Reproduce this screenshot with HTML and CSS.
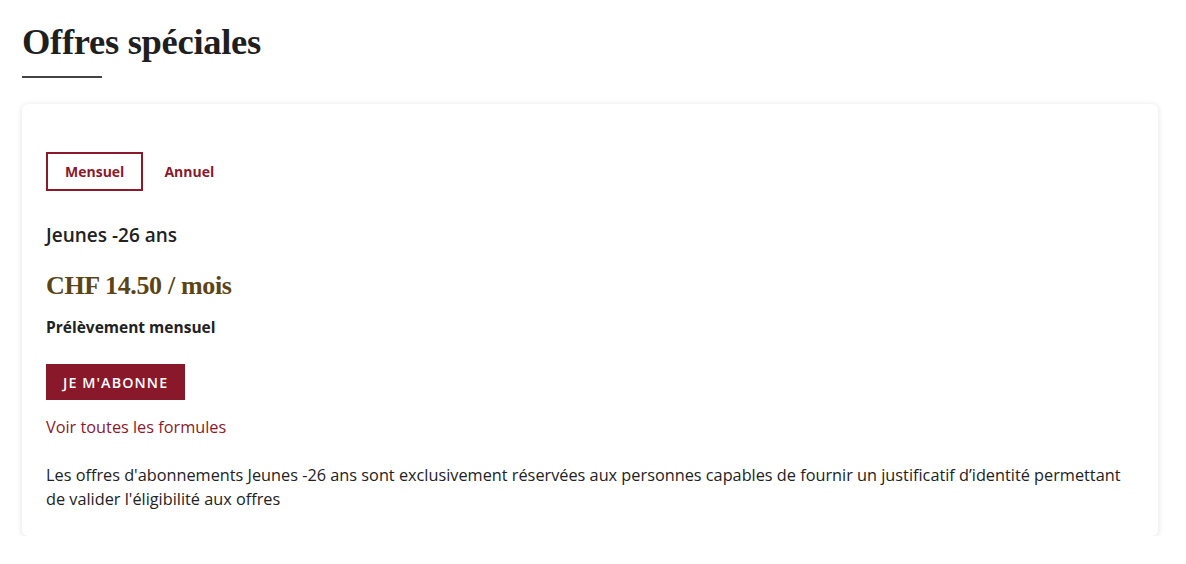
FILE: index.html
```html
<!DOCTYPE html>
<html lang="fr">
<head>
<meta charset="utf-8">
<title>Offres spéciales</title>
<link rel="stylesheet" href="styles.css">
</head>
<body>
<main class="page">
  <h1 class="title">Offres spéciales</h1>
  <div class="title-rule"></div>
  <section class="card">
    <div class="tabs">
      <button class="tab tab-active">Mensuel</button>
      <button class="tab">Annuel</button>
    </div>
    <h2 class="offer-name">Jeunes -26 ans</h2>
    <p class="price">CHF 14.50 / mois</p>
    <p class="billing">Prélèvement mensuel</p>
    <a class="cta" href="#">JE M'ABONNE</a>
    <a class="all-link" href="#">Voir toutes les formules</a>
    <p class="note">Les offres d'abonnements Jeunes -26 ans sont exclusivement réservées aux personnes capables de fournir un justificatif d’identité permettant de valider l'éligibilité aux offres</p>
  </section>
</main>
</body>
</html>
```

FILE: styles.css
```css
* { box-sizing: border-box; }
html, body { margin: 0; padding: 0; background: #ffffff; }
body { font-family: "Open Sans", "Noto Sans", sans-serif; color: #222; }
.page { padding: 20px 28px 0 22px; }
.title {
  font-family: "Liberation Serif", "DejaVu Serif", serif;
  font-weight: 700;
  font-size: 36.5px;
  line-height: 44px;
  margin: 0;
  color: #1f1f1f;
  letter-spacing: -0.3px;
}
.title-rule { width: 80px; height: 2px; background: #444; margin-top: 12px; }
.card {
  margin-top: 26px;
  background: #fff;
  border-radius: 6px;
  box-shadow: 0 1px 6px rgba(0,0,0,0.12);
  padding: 48px 24px 25px 24px;
  display: flex;
  flex-direction: column;
  align-items: flex-start;
}
.tabs { display: flex; gap: 2px; }
.tab {
  font-family: "Open Sans", sans-serif;
  font-weight: 700;
  font-size: 14px;
  color: #8a1a2b;
  background: none;
  border: 2px solid transparent;
  height: 39px;
  padding: 0 17px;
  cursor: pointer;
}
.tab-active { border-color: #8a1a2b; }
.offer-name { font-size: 19px; font-weight: 600; margin: 32px 0 0; line-height: 24px; color: #222; }
.price {
  font-family: "Liberation Serif", "DejaVu Serif", serif;
  font-size: 26px;
  font-weight: 700;
  color: #5b4516;
  margin: 23px 0 0;
  line-height: 32px;
  letter-spacing: -0.35px;
}
.billing { font-size: 15.5px; font-weight: 700; margin: 14px 0 0; line-height: 22px; color: #222; }
.cta {
  margin-top: 26px;
  display: inline-flex;
  align-items: center;
  height: 36px;
  padding: 0 17px;
  background: #88182a;
  color: #fff;
  font-size: 14.3px;
  font-weight: 600;
  letter-spacing: 1.1px;
  text-decoration: none;
}
.all-link { margin-top: 16px; font-size: 16.3px; color: #8a1a2b; text-decoration: none; line-height: 22px; }
.note { margin: 25px 0 0; font-size: 16.3px; line-height: 24px; color: #222; }
```
